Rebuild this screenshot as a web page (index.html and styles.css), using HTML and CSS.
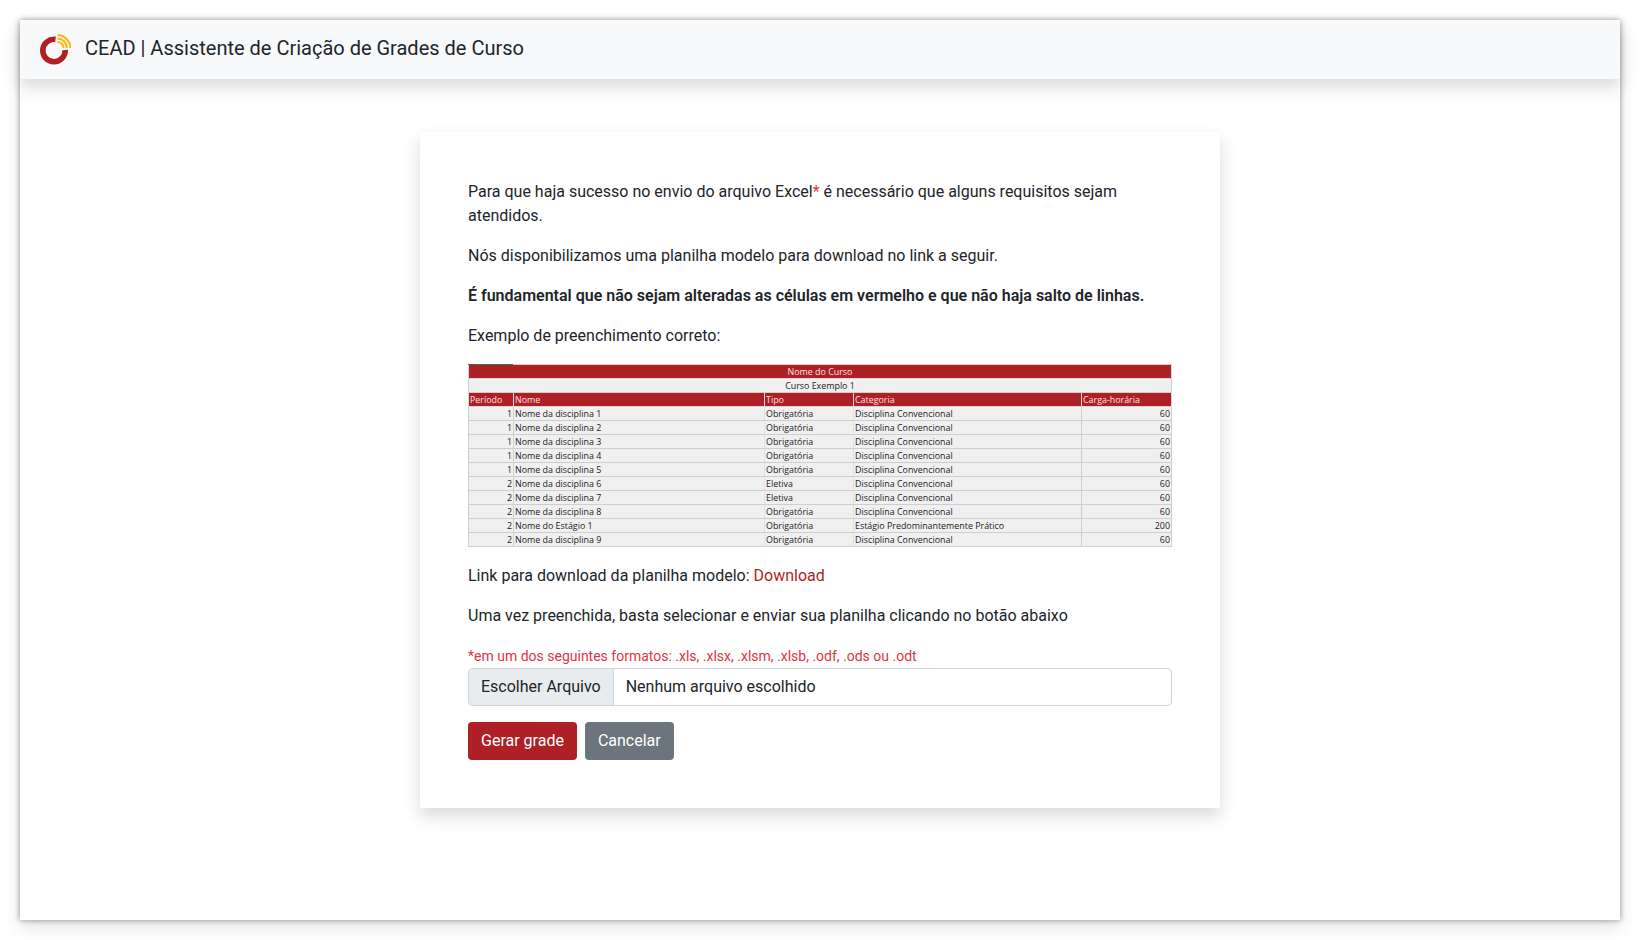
FILE: index.html
```html
<!DOCTYPE html>
<html lang="pt-BR">

<head>
    <meta charset="UTF-8">
    <title>CEAD | Assistente de Criação de Grades de Curso</title>
    <link rel="stylesheet" href="styles.css">
</head>

<body>
    <div class="window">
        <nav class="navbar">
            <svg class="logo" width="32" height="34" viewBox="0 0 32 34">
                <path d="M16.5 6.4 A11.2 11.2 0 1 0 26.2 17" fill="none" stroke="#ae1f26" stroke-width="5.6"/>
                <g fill="none" stroke="#fbb81c" stroke-width="2.2">
                    <path d="M18.5 2.2 A12.8 12.8 0 0 1 31.3 15"/>
                    <path d="M18.5 5.6 A9.4 9.4 0 0 1 27.9 15"/>
                    <path d="M18.5 9 A6 6 0 0 1 24.5 15"/>
                </g>
            </svg>
            <span class="brand">CEAD | Assistente de Criação de Grades de Curso</span>
        </nav>

        <main class="card">
            <p>Para que haja sucesso no envio do arquivo Excel<span class="req">*</span> é necessário que alguns requisitos sejam atendidos.</p>
            <p>Nós disponibilizamos uma planilha modelo para download no link a seguir.</p>
            <p><b>É fundamental que não sejam alteradas as células em vermelho e que não haja salto de linhas.</b></p>
            <p>Exemplo de preenchimento correto:</p>

            <div class="sheet">
                <div class="sheet-tab"></div>
                <table>
                    <colgroup>
                        <col class="c1"><col class="c2"><col class="c3"><col class="c4"><col class="c5">
                    </colgroup>
                    <tr class="red"><td colspan="5" class="mid">Nome do Curso</td></tr>
                    <tr><td colspan="5" class="mid">Curso Exemplo 1</td></tr>
                    <tr class="red"><td>Período</td><td>Nome</td><td>Tipo</td><td>Categoria</td><td>Carga-horária</td></tr>
                    <tr><td class="num">1</td><td>Nome da disciplina 1</td><td>Obrigatória</td><td>Disciplina Convencional</td><td class="num">60</td></tr>
                    <tr><td class="num">1</td><td>Nome da disciplina 2</td><td>Obrigatória</td><td>Disciplina Convencional</td><td class="num">60</td></tr>
                    <tr><td class="num">1</td><td>Nome da disciplina 3</td><td>Obrigatória</td><td>Disciplina Convencional</td><td class="num">60</td></tr>
                    <tr><td class="num">1</td><td>Nome da disciplina 4</td><td>Obrigatória</td><td>Disciplina Convencional</td><td class="num">60</td></tr>
                    <tr><td class="num">1</td><td>Nome da disciplina 5</td><td>Obrigatória</td><td>Disciplina Convencional</td><td class="num">60</td></tr>
                    <tr><td class="num">2</td><td>Nome da disciplina 6</td><td>Eletiva</td><td>Disciplina Convencional</td><td class="num">60</td></tr>
                    <tr><td class="num">2</td><td>Nome da disciplina 7</td><td>Eletiva</td><td>Disciplina Convencional</td><td class="num">60</td></tr>
                    <tr><td class="num">2</td><td>Nome da disciplina 8</td><td>Obrigatória</td><td>Disciplina Convencional</td><td class="num">60</td></tr>
                    <tr><td class="num">2</td><td>Nome do Estágio 1</td><td>Obrigatória</td><td>Estágio Predominantemente Prático</td><td class="num">200</td></tr>
                    <tr><td class="num">2</td><td>Nome da disciplina 9</td><td>Obrigatória</td><td>Disciplina Convencional</td><td class="num">60</td></tr>
                </table>
            </div>

            <p>Link para download da planilha modelo: <a href="#">Download</a></p>
            <p>Uma vez preenchida, basta selecionar e enviar sua planilha clicando no botão abaixo</p>

            <div class="formats">*em um dos seguintes formatos: .xls, .xlsx, .xlsm, .xlsb, .odf, .ods ou .odt</div>
            <div class="file-input">
                <span class="file-btn">Escolher Arquivo</span>
                <span class="file-name">Nenhum arquivo escolhido</span>
            </div>
            <div class="actions">
                <button class="btn btn-red">Gerar grade</button>
                <button class="btn btn-gray">Cancelar</button>
            </div>
        </main>
    </div>
</body>

</html>
```

FILE: styles.css
```css
* {
    box-sizing: border-box;
}

html,
body {
    margin: 0;
    height: 940px;
    overflow: hidden;
    background-color: #fff;
}

body {
    padding: 20px;
    font-family: Roboto, "Liberation Sans", sans-serif;
    font-size: 16px;
    line-height: 24px;
    color: #212529;
}

.window {
    height: 900px;
    background-color: #fff;
    box-shadow: 0 0 6px rgba(0, 0, 0, 0.4), 0 8px 16px rgba(0, 0, 0, 0.1);
}

.navbar {
    display: flex;
    align-items: center;
    height: 59px;
    padding-left: 19px;
    background-color: #f8f9fa;
    box-shadow: 0 8px 16px rgba(0, 0, 0, 0.15);
}

.logo {
    margin-top: 1px;
    margin-right: 14px;
}

.brand {
    margin-bottom: 4px;
    font-size: 20px;
    line-height: 30px;
}

.card {
    width: 800px;
    margin: 53px auto 0;
    padding: 48px;
    background-color: #fff;
    box-shadow: 0 8px 16px rgba(0, 0, 0, 0.15);
}

p {
    margin: 0 0 16px;
}

b {
    font-weight: 600;
}

.req {
    color: #dc3545;
}

a {
    color: #ae1f26;
    text-decoration: none;
}

/* planilha de exemplo */
.sheet {
    margin-bottom: 17px;
}

.sheet-tab {
    height: 1px;
    background: linear-gradient(to right, #2f7d4f 45px, #cfcfcf 45px);
}

.sheet table {
    width: 704px;
    table-layout: fixed;
    border-collapse: separate;
    border-spacing: 0;
    font-family: "Open Sans", sans-serif;
    font-size: 8.9px;
    line-height: 13px;
    color: #222;
    background-color: #f0f0f0;
}

.c1 {
    width: 46px;
}

.c2 {
    width: 251px;
}

.c3 {
    width: 89px;
}

.c4 {
    width: 228px;
}

.sheet td {
    height: 14px;
    padding: 0 1px;
    white-space: nowrap;
    overflow: hidden;
    border: 1px solid #cfcfcf;
    border-width: 0 1px 1px 0;
}

.sheet td:first-child {
    border-left: 1px solid #cfcfcf;
}

.sheet td:nth-child(2),
.sheet td:nth-child(3) {
    border-right-color: #e2e2e2;
}

.sheet .red td {
    background-color: #ae1f26;
    color: #fbe3e4;
    border-color: #d8d8d8;
}

.sheet .mid {
    text-align: center;
}

.sheet .num {
    text-align: right;
}

.formats {
    font-size: 14px;
    line-height: 21px;
    margin-top: 18px;
    margin-bottom: 1px;
    color: #dc3545;
}

.file-input {
    display: flex;
    height: 38px;
    border: 1px solid #ced4da;
    border-radius: 4px;
    overflow: hidden;
}

.file-btn {
    padding: 6px 12px;
    background-color: #e9ecef;
    border-right: 1px solid #ced4da;
}

.file-name {
    padding: 6px 12px;
}

.actions {
    display: flex;
    gap: 8px;
    margin-top: 16px;
}

.btn {
    height: 38px;
    padding: 6px 12px;
    border: 1px solid transparent;
    border-radius: 4px;
    font-family: inherit;
    font-size: 16px;
    line-height: 24px;
    color: #fff;
}

.btn-red {
    background-color: #ae1f26;
}

.btn-gray {
    background-color: #6c757d;
}
```
